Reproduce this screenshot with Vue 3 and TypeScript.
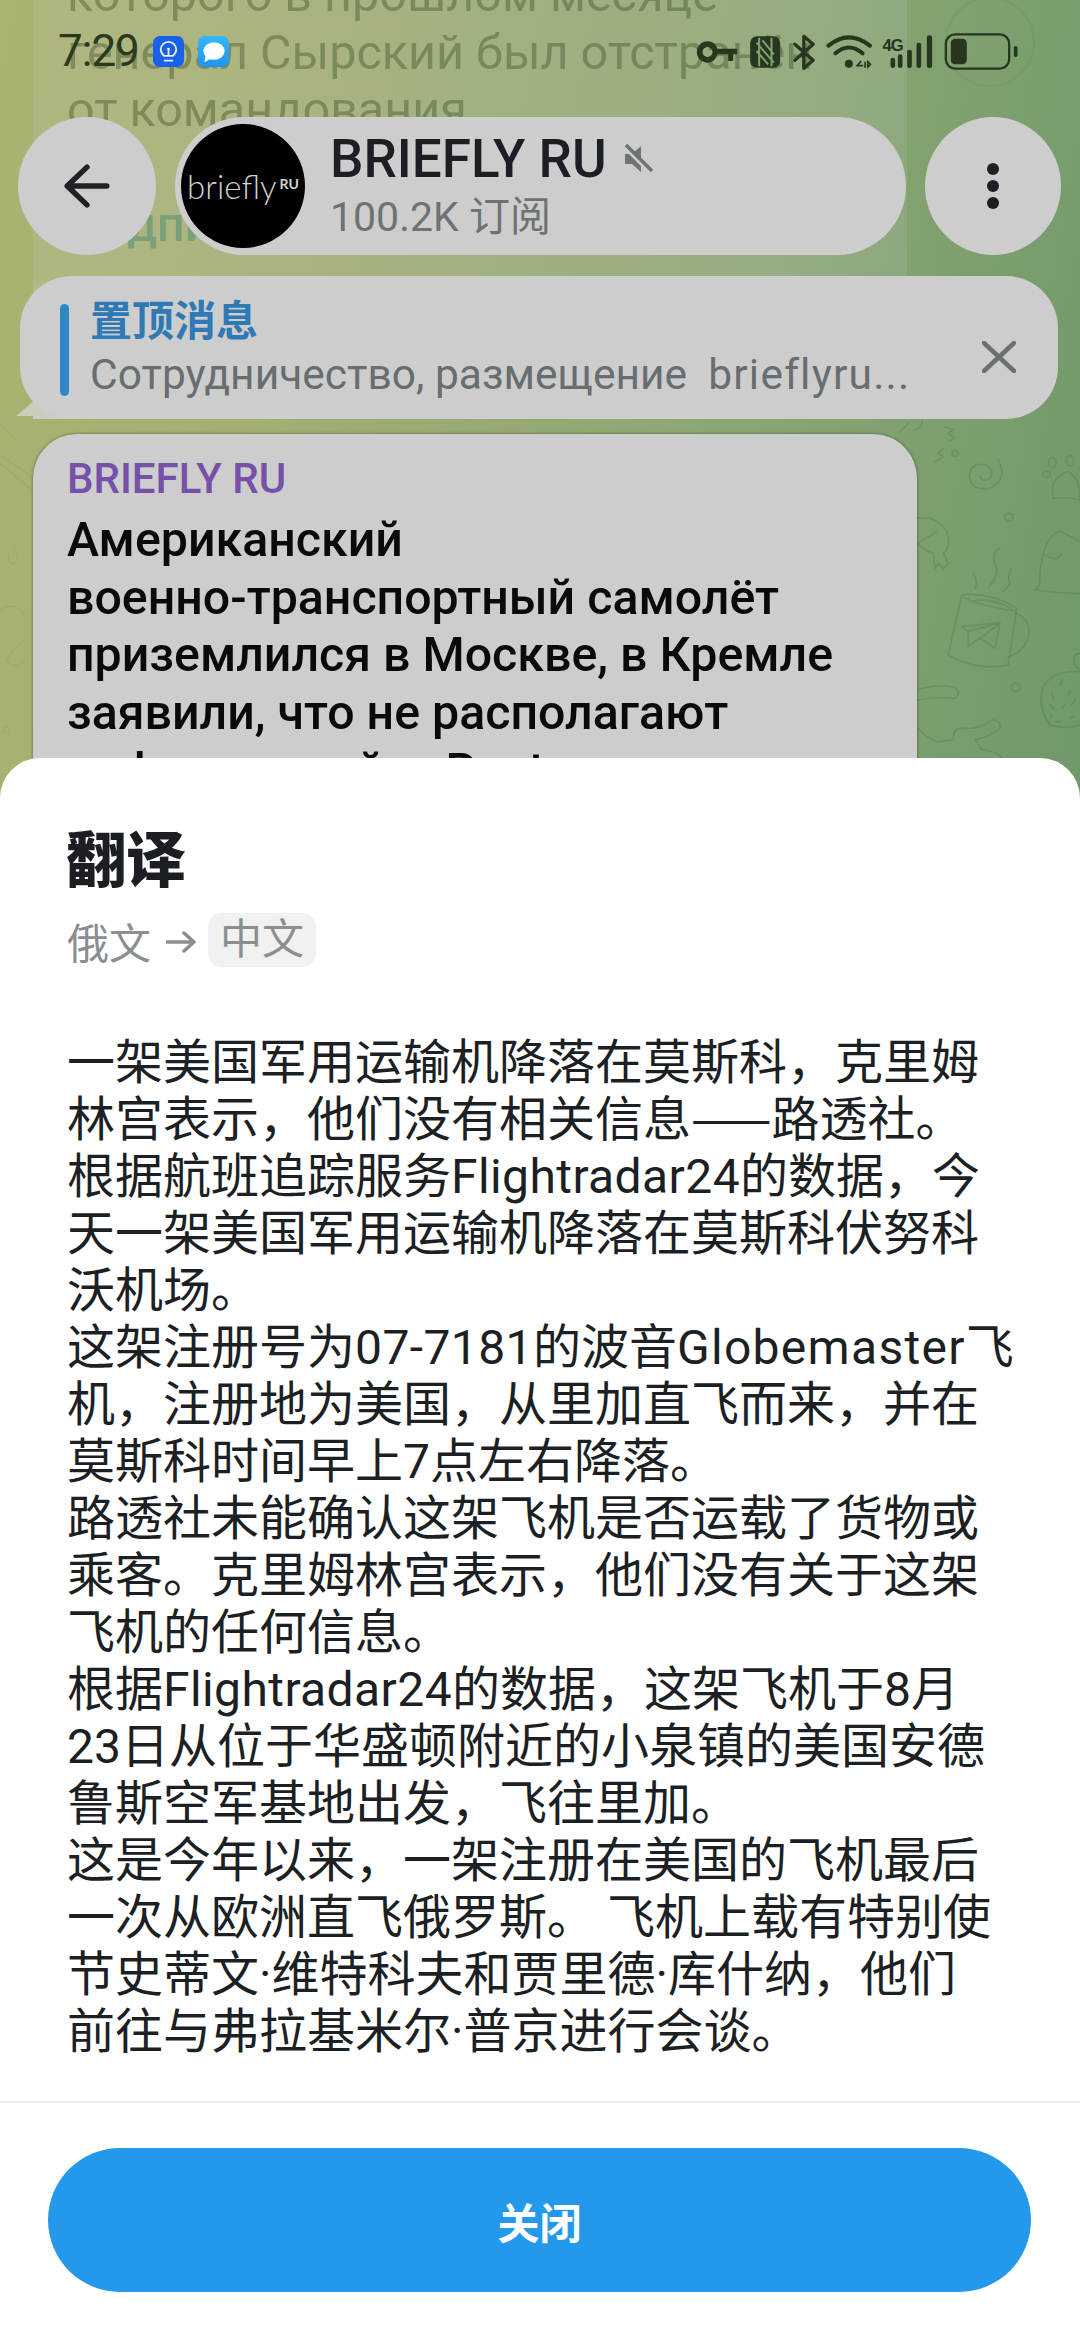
<template>
  <div class="screen">
    <div class="chat">
      <svg class="doodles" viewBox="0 0 1080 760" fill="none">
        <g stroke="#4f7f50" stroke-opacity="0.38" stroke-width="5" stroke-linecap="round" stroke-linejoin="round" transform="translate(880 400) scale(0.3333)">
          <path d="M245 585 L205 765 Q290 815 385 795 L410 625 Q330 575 245 585 M245 585 Q270 612 400 632 M270 605 Q330 590 392 625" />
          <path d="M408 640 Q455 660 445 710 Q430 760 385 770" />
          <path d="M245 680 L360 668 L345 745 L300 715 L265 738 L265 695 Z M265 695 L360 668 M300 715 L360 670" />
          <path d="M360 445 Q335 455 345 490 Q360 520 328 560 M280 520 Q295 545 285 565 M395 505 Q380 530 390 550 L370 575" />
          <path d="M355 180 Q385 240 330 265 Q270 275 268 225 Q275 185 315 195 Q345 210 330 235 Q310 250 300 230" />
          <circle cx="225" cy="160" r="9" />
          <circle cx="387" cy="352" r="12" />
          <circle cx="407" cy="862" r="13" />
          <path d="M520 295 Q505 240 560 215 Q600 225 600 300 Q560 290 520 295" />
          <ellipse cx="517" cy="188" rx="11" ry="15" />
          <ellipse cx="570" cy="182" rx="11" ry="15" />
          <ellipse cx="500" cy="223" rx="11" ry="9" />
          <path d="M113 355 Q170 345 200 395 Q215 440 190 460 L205 490 L190 505 L175 490 L165 505 L160 460 Q130 450 113 430 M113 430 L170 395" />
          <path d="M462 570 Q480 570 480 520 Q490 410 540 393 L600 425 M500 465 Q530 490 545 460 M470 570 Q530 580 600 580" />
          <path d="M600 815 Q520 810 490 860 Q470 920 510 975 Q560 990 600 975 M600 810 Q575 790 585 765 L600 760" />
          <path d="M515 880 L520 895 M545 840 L540 855 M570 870 L565 885 M510 915 L520 925 M545 925 L555 915 M585 900 L575 915 M530 965 L545 965 M570 955 L580 950 M515 945 L512 955" />
          <path d="M113 870 Q170 850 225 862 Q245 880 225 895 Q170 890 113 900" />
          <path d="M113 985 Q160 1030 180 1025 L220 1020 Q220 980 250 985 Q300 990 335 960 Q365 960 360 985 Q330 1010 285 1020 L305 1050 Q340 1050 370 1075" />
          <path d="M100 90 Q130 85 125 65 M60 95 L85 70 M195 80 L220 90 L205 100 L225 115 L210 122 M165 185 L190 170 L172 160 L190 145" />
        </g>
        <g stroke="#7d8a4f" stroke-opacity="0.35" stroke-width="2" fill="none" transform="translate(0 380) scale(0.3333)">
          <path d="M0 225 L96 290 M0 250 L96 330 M0 130 L50 180" />
          <path d="M40 505 Q65 525 45 550 Q20 555 25 525" />
          <path d="M0 690 Q50 660 75 710 M75 775 Q45 800 20 840 Q50 880 80 830" />
          <circle cx="20" cy="1050" r="10" />
        </g>
        <circle cx="990" cy="42" r="44" stroke="#5f8a5c" stroke-opacity="0.2" stroke-width="2" />
      </svg>

      <div class="old-bubble">
        <p class="old-line">которого в прошлом месяце</p>
        <p class="old-line">генерал Сырский был отстранён</p>
        <p class="old-line">от командования</p>
        <p class="old-line">&nbsp;</p>
        <p class="old-link">Подписаться</p>
        <span class="tail"></span>
      </div>

      <div class="bubble">
        <div class="bubble-name">BRIEFLY RU</div>
        <div class="bubble-text">Американский<br />военно-транспортный самолёт<br />приземлился в Москве, в Кремле<br />заявили, что не располагают<br />информацией — Reuters</div>
      </div>
    </div>

    <div class="status-bar">
      <div class="status-left">
        <span class="clock">7:29</span>
        <svg class="app-icon" viewBox="0 0 32 32">
          <rect width="32" height="32" rx="7" fill="#1b60e9" />
          <path d="M11.5 20.5 C9 18.5 8 16.5 8 14 a8 8 0 0 1 16 0 c0 2.500 -1 4.500 -3.500 6.500 Z M12 25.500 h8 M16 20 v-5" fill="none" stroke="#e6f0ff" stroke-width="1.800" stroke-linecap="round" stroke-linejoin="round" />
          <circle cx="16" cy="13.500" r="1.500" fill="#e6f0ff" />
        </svg>
        <svg class="app-icon chat-app" viewBox="0 0 32 32">
          <defs>
            <linearGradient id="msgGrad" x1="0" y1="0" x2="0" y2="1">
              <stop offset="0" stop-color="#34b7fb" />
              <stop offset="1" stop-color="#1f93ee" />
            </linearGradient>
          </defs>
          <rect width="32" height="32" rx="7" fill="url(#msgGrad)" />
          <ellipse cx="16.500" cy="15.500" rx="11" ry="9" fill="#fff" />
          <path d="M8 20 L6.500 27 L14 23 Z" fill="#fff" />
        </svg>
      </div>
      <svg class="status-right" viewBox="100 90 980 120" fill="none">
        <g fill="#26361f" stroke="none">
          <path fill-rule="evenodd" d="M143 121 a32 32 0 0 1 30 22 H232 V160 H220 V180 H205 V160 H173 a32 32 0 0 1 -30 25 a32 32 0 0 1 0 -64 Z M143 138 a15 15 0 1 0 0.100 0 Z" />
          <rect x="271" y="106" width="90" height="94" rx="20" />
          <circle cx="567" cy="188" r="12" />
          <rect x="692" y="170" width="14" height="31" rx="7" />
          <rect x="714" y="160" width="14" height="41" rx="7" />
          <rect x="742" y="146" width="14" height="55" rx="6" />
          <rect x="770" y="125" width="14" height="76" rx="6" />
          <rect x="801" y="103" width="16" height="98" rx="7" />
          <rect x="873" y="113" width="48" height="77" rx="13" />
          <rect x="1062" y="135" width="11" height="33" rx="5" />
        </g>
        <path d="M298 110 V196 M335 110 V196 M290 125 L342 185 M290 150 L325 190 M308 118 L342 160" stroke="#7fa274" stroke-width="6" />
        <path d="M405 130 L460 178 L432 202 V106 L460 130 L405 178" stroke="#26361f" stroke-width="10" stroke-linejoin="round" stroke-linecap="round" />
        <path d="M506 134 Q567 84 630 134 M527 157 Q567 122 608 157" stroke="#26361f" stroke-width="12" stroke-linecap="round" />
        <path d="M604 180 L592 194 H610 M616 182 V200 M624 182 V198 L632 190 Z" stroke="#26361f" stroke-width="5" />
        <rect x="858" y="100" width="190" height="103" rx="28" stroke="#26361f" stroke-width="7" />
        <text x="668" y="150" class="net-label">4G</text>
      </svg>
    </div>

    <div class="top-bar">
      <button class="round-btn back-btn">
        <svg viewBox="0 0 60 60" fill="none" stroke="#1e2125" stroke-width="6" stroke-linecap="round" stroke-linejoin="round">
          <path d="M52 30 H8 M30 9 L8 30 L30 51" />
        </svg>
      </button>
      <div class="channel-pill">
        <div class="avatar">briefly<span class="avatar-ru">RU</span></div>
        <div class="channel-info">
          <div class="channel-title">
            BRIEFLY RU
            <svg class="mute-icon" viewBox="0 0 30 30">
              <path d="M2 10 H9 L18 2 V28 L9 20 H2 Z" fill="#6d7474" />
              <path d="M2 3 L28 29" stroke="#cdcdcd" stroke-width="4.500" />
              <path d="M3 1 L29 27" stroke="#6d7474" stroke-width="3.500" />
            </svg>
          </div>
          <div class="channel-subs">100.2K 订阅</div>
        </div>
      </div>
      <button class="round-btn more-btn">
        <span class="dot"></span>
        <span class="dot"></span>
        <span class="dot"></span>
      </button>
    </div>

    <div class="pinned">
      <span class="pinned-bar"></span>
      <div class="pinned-body">
        <div class="pinned-title">置顶消息</div>
        <div class="pinned-text">Сотрудничество, размещение&nbsp; <span class="pinned-link">brieflyru...</span></div>
      </div>
      <svg class="pinned-close" viewBox="0 0 34 32" fill="none" stroke="#6b7173" stroke-width="4.500" stroke-linecap="round">
        <path d="M2 2 L32 30 M32 2 L2 30" />
      </svg>
    </div>

    <div class="sheet">
      <h2 class="sheet-title">翻译</h2>
      <div class="lang-row">
        <span class="lang-from">俄文</span>
        <svg class="lang-arrow" viewBox="0 0 30 24" fill="none" stroke="#8b8e90" stroke-width="3.500" stroke-linecap="round" stroke-linejoin="round">
          <path d="M1 12 H28 M18 3 L28 12 L18 21" />
        </svg>
        <span class="lang-to">中文</span>
      </div>
      <div class="translation">
        <p>一架美国军用运输机降落在莫斯科，克里姆林宫表示，他们没有相关信息<span class="cjk-dash">——</span>路透社。</p>
        <p>根据航班追踪服务<span class="lat">Flightradar24</span>的数据，今天一架美国军用运输机降落在莫斯科伏努科沃机场。</p>
        <p>这架注册号为<span class="lat">07-7181</span>的波音<span class="lat-wide">Globemaster</span>飞机，注册地为美国，从里加直飞而来，并在莫斯科时间早上7点左右降落。</p>
        <p>路透社未能确认这架飞机是否运载了货物或乘客。克里姆林宫表示，他们没有关于这架飞机的任何信息。</p>
        <p>根据<span class="lat">Flightradar24</span>的数据，这架飞机于8月<br />23日从位于华盛顿附近的小泉镇的美国安德鲁斯空军基地出发，飞往里加。</p>
        <p>这是今年以来，一架注册在美国的飞机最后一次从欧洲直飞俄罗斯。 飞机上载有特别使节史蒂文·维特科夫和贾里德·库什纳，他们<br />前往与弗拉基米尔·普京进行会谈。</p>
      </div>
      <div class="sheet-footer">
        <button class="close-btn">关闭</button>
      </div>
    </div>
  </div>
</template>

<script setup lang="ts">
// static screen, nothing to wire up
</script>

<style>
html,
body {
  margin: 0;
  padding: 0;
}
</style>

<style scoped>
.screen {
  position: relative;
  width: 1080px;
  height: 2340px;
  overflow: hidden;
  font-family: Roboto, "Noto Sans CJK SC", sans-serif;
  background: linear-gradient(100deg, #acb271 0%, #a6b072 16%, #8aa673 55%, #6c9667 86%, #6e9869 100%);
}

.chat {
  position: absolute;
  inset: 0;
  display: flex;
  flex-direction: column;
  align-items: flex-start;
  padding-left: 33px;
}

.doodles {
  position: absolute;
  top: 0;
  left: 0;
  width: 1080px;
  height: 760px;
}

.old-bubble {
  position: relative;
  width: 874px;
  height: 453px;
  margin-top: -34px;
  padding-left: 34px;
  box-sizing: border-box;
  background: linear-gradient(180deg, rgba(205, 205, 200, 0.16) 0%, rgba(205, 205, 200, 0.16) 68%, #cdcdc4 90%);
}

.old-line,
.old-link {
  margin: 0;
  font-size: 48.500px;
  line-height: 57.500px;
  white-space: nowrap;
}

.old-line {
  color: rgba(62, 82, 44, 0.42);
}

.old-link {
  color: #7aa07a;
  font-weight: 500;
}

.tail {
  position: absolute;
  left: -17px;
  bottom: 3px;
  width: 50px;
  height: 20px;
  background: #cbcdbb;
  clip-path: polygon(0 100%, 24px 0, 100% 0, 100% 100%);
}

.bubble {
  position: relative;
  width: 884px;
  height: 420px;
  margin-top: 15px;
  padding: 23px 34px 0;
  box-sizing: border-box;
  border-radius: 44px 44px 0 0;
  background: #cdcdcd;
  box-shadow: 0 0 3px rgba(40, 60, 30, 0.7);
}

.bubble-name {
  font-size: 42px;
  line-height: 44px;
  font-weight: 500;
  color: #7650a9;
}

.bubble-text {
  margin-top: 10px;
  font-size: 48.300px;
  line-height: 57.700px;
  font-weight: 500;
  color: #0a0a0a;
  white-space: nowrap;
}

.status-bar {
  position: absolute;
  top: 30px;
  left: 0;
  right: 0;
  height: 42px;
  padding: 0 60px 0 58px;
  display: flex;
  align-items: center;
  justify-content: space-between;
}

.status-left {
  display: flex;
  align-items: center;
  gap: 14px;
}

.clock {
  font-size: 44px;
  line-height: 42px;
  color: #2b3a1e;
  letter-spacing: -1px;
}

.app-icon {
  width: 31px;
  height: 31px;
}

.status-right {
  width: 327px;
  height: 40px;
}

.net-label {
  font-family: "Liberation Sans", sans-serif;
  font-size: 50px;
  font-weight: 700;
  fill: #26361f;
  letter-spacing: -3px;
}

.top-bar {
  position: absolute;
  top: 117px;
  left: 18px;
  width: 1043px;
  height: 138px;
  display: flex;
  gap: 19px;
}

.round-btn {
  flex: none;
  width: 138px;
  height: 138px;
  padding: 0;
  border: none;
  border-radius: 50%;
  background: #cdcdcd;
  display: flex;
  align-items: center;
  justify-content: center;
}

.back-btn svg {
  width: 54px;
  height: 54px;
}

.more-btn {
  flex-direction: column;
  gap: 5px;
  width: 136px;
}

.dot {
  width: 12px;
  height: 12px;
  border-radius: 50%;
  background: #1c1f23;
}

.channel-pill {
  flex: 1;
  display: flex;
  align-items: center;
  gap: 25px;
  padding-left: 6px;
  border-radius: 69px;
  background: #cdcdcd;
}

.avatar {
  flex: none;
  width: 124px;
  height: 124px;
  border-radius: 50%;
  background: #000;
  color: #d2d2d2;
  font-family: Lato, sans-serif;
  font-weight: 300;
  font-size: 33px;
  display: flex;
  align-items: center;
  justify-content: center;
}

.avatar-ru {
  font-size: 14px;
  font-weight: 700;
  margin-left: 3px;
  margin-top: -5px;
}

.channel-info {
  display: flex;
  flex-direction: column;
}

.channel-title {
  display: flex;
  align-items: center;
  gap: 16px;
  font-size: 53px;
  line-height: 58px;
  font-weight: 500;
  color: #1b1e22;
  white-space: nowrap;
}

.mute-icon {
  width: 30px;
  height: 30px;
}

.channel-subs {
  font-size: 41px;
  line-height: 50px;
  color: #6d7272;
  margin-top: 4px;
}

.pinned {
  position: absolute;
  top: 276px;
  left: 20px;
  width: 1038px;
  height: 143px;
  box-sizing: border-box;
  padding: 0 42px 0 40px;
  border-radius: 52px;
  background: #cdcdcd;
  display: flex;
  align-items: center;
  gap: 21px;
}

.pinned-bar {
  flex: none;
  width: 9px;
  height: 92px;
  margin-top: 5px;
  border-radius: 5px;
  background: #2f86c6;
}

.pinned-body {
  flex: 1;
  min-width: 0;
}

.pinned-title {
  font-size: 42px;
  line-height: 50px;
  font-weight: 700;
  color: #2f7ab5;
  margin-top: 2px;
}

.pinned-text {
  margin-top: 3px;
  font-size: 42.500px;
  line-height: 50px;
  color: #686e70;
  white-space: nowrap;
}

.pinned-link {
  letter-spacing: 1.200px;
}

.pinned-close {
  flex: none;
  width: 34px;
  height: 32px;
  margin-top: 18px;
}

.sheet {
  position: absolute;
  left: 0;
  right: 0;
  bottom: 0;
  height: 1582px;
  box-sizing: border-box;
  padding-top: 69px;
  background: #fff;
  border-radius: 40px 40px 0 0;
  display: flex;
  flex-direction: column;
}

.sheet-title {
  margin: 0;
  padding: 0 66px;
  font-size: 60px;
  line-height: 70px;
  font-weight: 900;
  color: #1b1e22;
}

.lang-row {
  display: flex;
  align-items: center;
  height: 54px;
  margin-top: 16px;
  padding: 0 67px;
  font-size: 42px;
  color: #8b8e90;
}

.lang-arrow {
  width: 30px;
  height: 24px;
  margin: 4px 12px 0 15px;
}

.lang-to {
  height: 54px;
  line-height: 54px;
  padding: 0 12px;
  border-radius: 14px;
  background: #f1f1f1;
}

.translation {
  margin-top: 67px;
  padding: 0 66px 0 67px;
  font-size: 48px;
  line-height: 57px;
  color: #1c1f23;
}

.translation p {
  margin: 0;
}

.cjk-dash {
  font-family: "Noto Sans CJK SC", sans-serif;
  line-height: 0;
}

.lat {
  letter-spacing: 0.400px;
}

.lat-wide {
  letter-spacing: 1.300px;
}

.sheet-footer {
  margin-top: auto;
  border-top: 2px solid #ececec;
  padding: 45px 49px 48px 48px;
}

.close-btn {
  display: block;
  width: 100%;
  height: 144px;
  border: none;
  border-radius: 72px;
  background: #2499ec;
  color: #fff;
  font-family: inherit;
  font-size: 42px;
  font-weight: 700;
}
</style>
